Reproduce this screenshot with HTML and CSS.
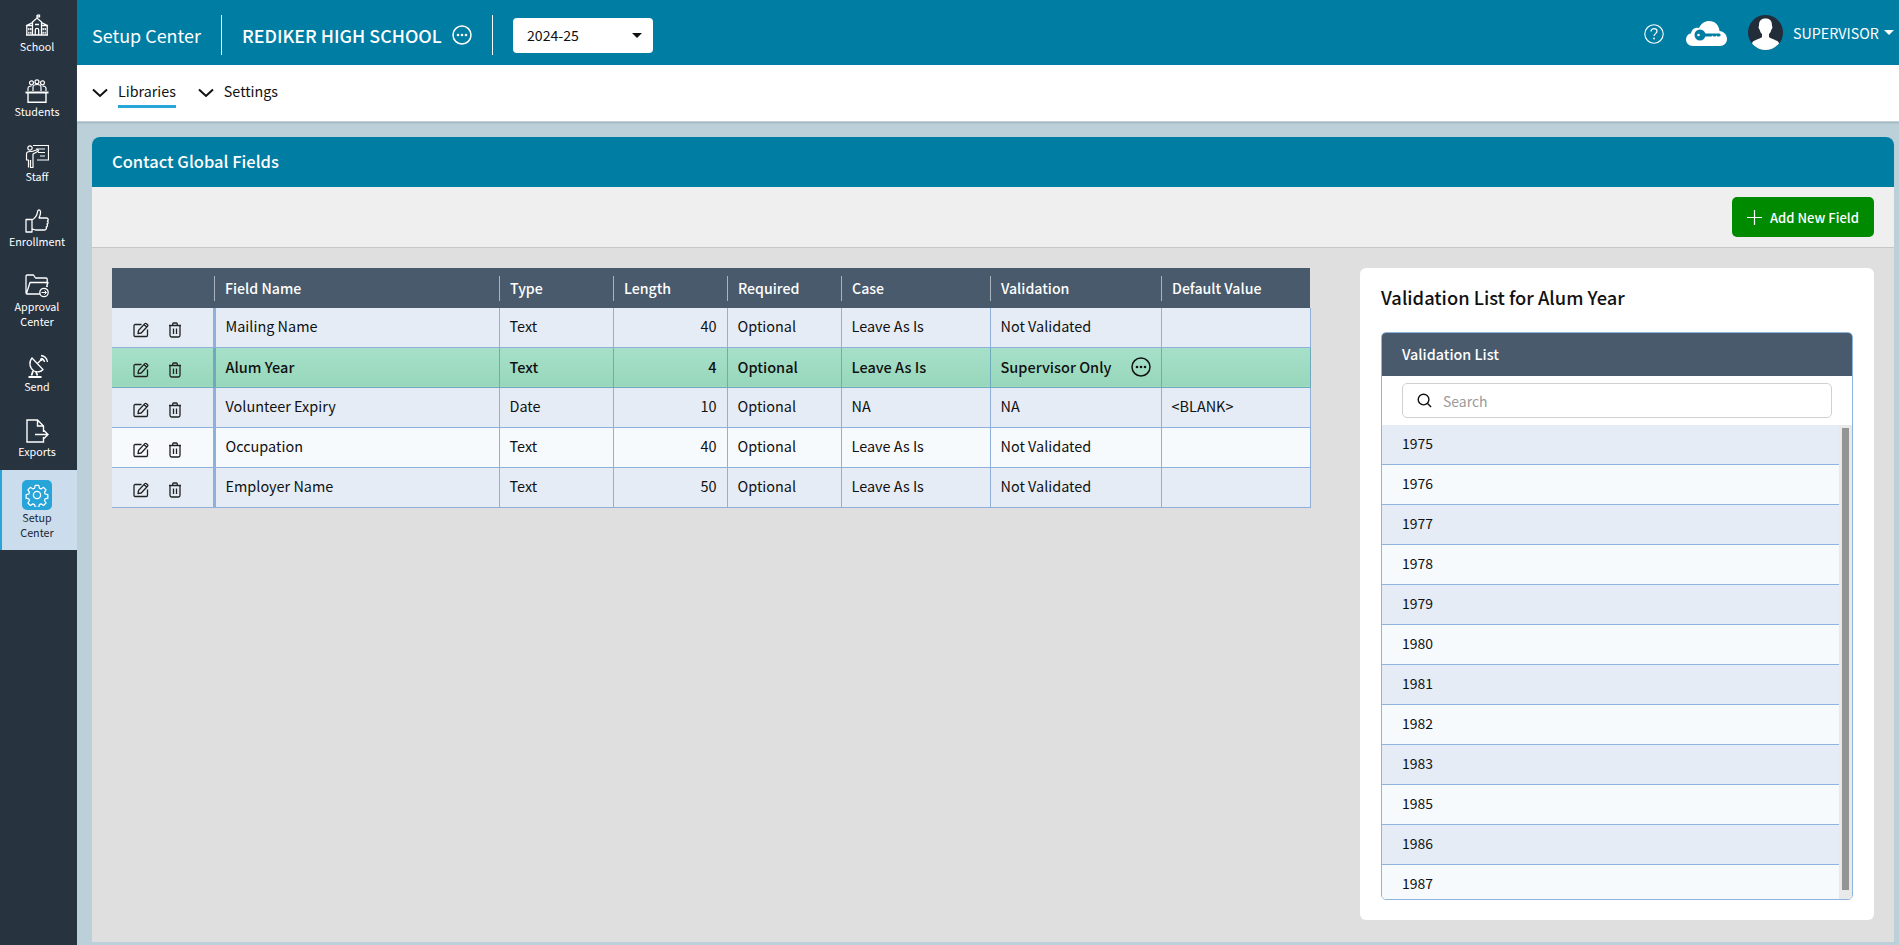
FILE: index.html
```html
<!DOCTYPE html>
<html lang="en">
<head>
<meta charset="utf-8">
<title>Contact Global Fields</title>
<link rel="stylesheet" href="styles.css">
</head>
<body>
<svg class="defs" aria-hidden="true">
  <symbol id="i-edit" viewBox="0 0 16 16"><path d="M8.500 2.500H2.200c-.7 0-1.200.5-1.200 1.200v9.600c0 .7.500 1.200 1.200 1.200h11.100c.7 0 1.200-.5 1.200-1.200V7.500" fill="none" stroke="currentColor" stroke-width="1.300"/><path d="M5.500 8.500 11.800 1.600c.4-.4 1-.4 1.400 0l1.300 1.200c.4.400.4 1 0 1.400L8.200 11l-3.200.6zM10.900 2.600l2.700 2.500" fill="none" stroke="currentColor" stroke-width="1.300" stroke-linejoin="round"/></symbol>
  <symbol id="i-trash" viewBox="0 0 14 16"><path d="M1 3.500h12M4.700 3.300V2c0-.6.400-1 1-1h2.600c.6 0 1 .4 1 1v1.300M2 3.700v9.600c0 .9.600 1.700 1.600 1.700h6.800c1 0 1.600-.8 1.600-1.700V3.700M5.500 6.500v5.500M8.500 6.500v5.500" fill="none" stroke="currentColor" stroke-width="1.300"/></symbol>
  <symbol id="i-more" viewBox="0 0 20 20"><circle cx="10" cy="10" r="9" fill="none" stroke="currentColor" stroke-width="1.500"/><circle cx="6" cy="10" r="1.300" fill="currentColor"/><circle cx="10" cy="10" r="1.300" fill="currentColor"/><circle cx="14" cy="10" r="1.300" fill="currentColor"/></symbol>
  <symbol id="i-chev" viewBox="0 0 16 10"><path d="M1 1.500 8 8l7-6.500" fill="none" stroke="currentColor" stroke-width="2"/></symbol>
</svg>

<nav class="sidebar">
  <a class="nav-item">
    <svg class="nav-icon" viewBox="0 0 24 24"><path d="M7.500 20.500V8L12 4l4.500 4v12.500M12 4V1M12 1.200h2.500v1.600H12M1 21h22M1.800 21v-9.500h5.700M22.200 21v-9.500h-5.700M1 11.800 7.500 8.500M23 11.800l-6.500-3.300M10.300 21v-5a1.700 1.700 0 0 1 3.400 0v5M3.800 14v2.300M5.800 14v2.300M18.200 14v2.300M20.200 14v2.300M3.800 17.800v2M5.800 17.800v2M18.200 17.800v2M20.200 17.800v2M10 10.500h4" fill="none" stroke="currentColor" stroke-width="1.300"/></svg>
    <span class="nav-label">School</span>
  </a>
  <a class="nav-item">
    <svg class="nav-icon" viewBox="0 0 24 24"><circle cx="6.500" cy="3.800" r="2" fill="none" stroke="currentColor" stroke-width="1.200"/><circle cx="12" cy="2.800" r="2" fill="none" stroke="currentColor" stroke-width="1.200"/><circle cx="17.500" cy="3.800" r="2" fill="none" stroke="currentColor" stroke-width="1.200"/><path d="M3 12V9.500C3 7.500 5 7 6.500 7M21 12V9.500C21 7.500 19 7 17.500 7M8 12V8c0-1.500 2-2.500 4-2.500S16 6.500 16 8v4" fill="none" stroke="currentColor" stroke-width="1.200"/><path d="M.5 12.500h23v2H.5z" fill="currentColor"/><path d="M3 14v9.300h18V14" fill="none" stroke="currentColor" stroke-width="1.400"/></svg>
    <span class="nav-label">Students</span>
  </a>
  <a class="nav-item">
    <svg class="nav-icon" viewBox="0 0 24 24"><path d="M8 1.500h15.500v14.500H12M11 5h9M13 8.500h7M15 12h5" fill="none" stroke="currentColor" stroke-width="1.200"/><circle cx="5" cy="4" r="2.200" fill="none" stroke="currentColor" stroke-width="1.200"/><path d="M3.500 23.500V16H1.500v-6C1.500 8 3 7.500 5 7.500h2l6-2 .5 1.500-5.500 3V23.500H5.500V16" fill="none" stroke="currentColor" stroke-width="1.200" stroke-linejoin="round"/></svg>
    <span class="nav-label">Staff</span>
  </a>
  <a class="nav-item">
    <svg class="nav-icon" viewBox="0 0 24 24"><path d="M1 10.500h6v12.500H1zM7 11c2.500-1.500 5-4 5.500-8 .2-1.500 1-2.500 2-2 1.500.8 1 4.500-.5 8h7.500c2 0 2.200 2.500.8 3 1.200.8 1 2.800-.3 3 .8 1 .5 2.800-.8 3 .5 1.200 0 3-1.700 3H11c-1.500 0-2.500-.8-4-1" fill="none" stroke="currentColor" stroke-width="1.300" stroke-linejoin="round"/></svg>
    <span class="nav-label">Enrollment</span>
  </a>
  <a class="nav-item nav-tall">
    <svg class="nav-icon" viewBox="0 0 24 24"><path d="M15 20H2.200C1.400 20 1 19.500 1 18.700V2.300C1 1.500 1.400 1 2.200 1h6.300l2 3H21c.8 0 1.200.5 1.200 1.200V13M1.500 19.500 5 8.500h18L21.500 13" fill="none" stroke="currentColor" stroke-width="1.300" stroke-linejoin="round"/><circle cx="19" cy="18.500" r="4.200" fill="none" stroke="currentColor" stroke-width="1.300"/><path d="M16.500 18.500h5M19.500 16.500l2 2-2 2" fill="none" stroke="currentColor" stroke-width="1"/></svg>
    <span class="nav-label">Approval<br>Center</span>
  </a>
  <a class="nav-item">
    <svg class="nav-icon" viewBox="0 0 24 24"><path d="M7 4c-3.500 4-2.500 10 2 13 3 1.500 7 1 9-1.500zM12 10l4-4M16 1.500c3.500.5 6 3 6.500 6.500M16 4.500c2 .3 3.200 1.500 3.500 3.500" fill="none" stroke="currentColor" stroke-width="1.300"/><path d="M8 17l-1.500 4.500M11 18l1.500 3.500M3.500 23h13" fill="none" stroke="currentColor" stroke-width="1.800"/><circle cx="16.500" cy="5.500" r="1.400" fill="currentColor"/></svg>
    <span class="nav-label">Send</span>
  </a>
  <a class="nav-item">
    <svg class="nav-icon" viewBox="0 0 24 24"><path d="M18.500 13V7l-6-6H2v22h16.500v-5M12.500 1v6h6M10 15.500h13M19 11.500l4 4-4 4" fill="none" stroke="currentColor" stroke-width="1.400"/></svg>
    <span class="nav-label">Exports</span>
  </a>
  <a class="nav-item nav-active">
    <span class="gear-box">
      <svg class="gear" viewBox="0 0 24 24"><path d="M10 1.200h4l.7 3.200 1.900.8 2.800-1.800 2.800 2.800-1.800 2.800.8 1.900 3 .7v4l-3 .7-.8 1.900 1.800 2.800-2.800 2.800-2.800-1.800-1.900.8-.7 3h-4l-.7-3-1.900-.8-2.800 1.800-2.800-2.800 1.800-2.800-.8-1.900-3-.7v-4l3-.7.8-1.900-1.800-2.800 2.800-2.800 2.800 1.800 1.900-.8z" transform="translate(1.300 1.300) scale(.89)" fill="none" stroke="currentColor" stroke-width="1.400" stroke-linejoin="round"/><circle cx="12" cy="12" r="3.600" fill="none" stroke="currentColor" stroke-width="1.300"/></svg>
    </span>
    <span class="nav-label">Setup<br>Center</span>
  </a>
</nav>

<div class="main">
  <header class="topbar">
    <span class="app-name">Setup Center</span>
    <span class="top-div"></span>
    <span class="school">REDIKER HIGH SCHOOL</span>
    <svg class="school-more"><use href="#i-more"/></svg>
    <span class="top-div"></span>
    <div class="year"><span>2024-25</span><i class="year-caret"></i></div>
    <div class="top-right">
      <svg class="help" viewBox="0 0 20 20"><circle cx="10" cy="10" r="9.200" fill="none" stroke="currentColor" stroke-width="1.100"/><path d="M7 7.500C7 5.500 8.500 4.700 10 4.700s3 1 3 2.600c0 2.200-3 2.400-3 4.700" fill="none" stroke="currentColor" stroke-width="1.200"/><circle cx="10" cy="14.500" r=".9" fill="currentColor"/></svg>
      <svg class="cloud" viewBox="0 0 41 25"><path d="M7 25C2.500 25 0 22 0 18.500c0-3 2-5.500 5-6.200C6 7.500 10 6 13 7 15 2.500 19 0 23 0c6 0 10 4 10.500 10 4 .5 7.500 3.500 7.500 8 0 4-3 7-7 7z" fill="#fff"/><circle cx="14" cy="14" r="5.500" fill="#007da3"/><circle cx="12.500" cy="14" r="1.300" fill="#fff"/><path d="M18 12.500h15.500l1.500 1.500-1.500 1.500h-2l-1-1-1 1h-2l-1-1-1 1H18z" fill="#007da3"/></svg>
      <svg class="avatar" viewBox="0 0 35 35"><defs><clipPath id="av"><circle cx="17.500" cy="17.500" r="17.500"/></clipPath></defs><circle cx="17.500" cy="17.500" r="17.500" fill="#222d39"/><path clip-path="url(#av)" d="M11 10.500C11 5 14 3.500 17.500 3.500S24 5 24 10.500c0 1 .6 1 .3 2.600-.2 1-.6 1.200-.9 1.400-.4 2-1.400 3.500-2.400 4.500v3c1 1.500 6 2.500 9 4.500 1 .8 1.500 4 1.500 8.500H3.500c0-4.500.5-7.700 1.500-8.500 3-2 8-3 9-4.500v-3c-1-1-2-2.500-2.400-4.500-.3-.2-.7-.4-.9-1.400-.3-1.600.3-1.600.3-2.600z" fill="#fff"/></svg>
      <span class="user">SUPERVISOR</span>
      <i class="user-caret"></i>
    </div>
  </header>

  <div class="subnav">
    <a class="sub-item"><svg class="chev"><use href="#i-chev"/></svg><span class="sub-label sub-on">Libraries</span></a>
    <a class="sub-item"><svg class="chev"><use href="#i-chev"/></svg><span class="sub-label">Settings</span></a>
  </div>

  <div class="content">
    <section class="panel">
      <h1 class="panel-head">Contact Global Fields</h1>
      <div class="toolbar">
        <button class="add-btn" type="button">
          <svg class="plus" viewBox="0 0 15 15"><path d="M7.500 0v15M0 7.500h15" stroke="currentColor" stroke-width="1.200"/></svg>
          Add New Field
        </button>
      </div>
      <div class="panel-body">
        <table class="fields">
          <colgroup>
            <col class="c-act"><col class="c-name"><col class="c-type"><col class="c-len"><col class="c-req"><col class="c-case"><col class="c-val"><col class="c-def">
          </colgroup>
          <thead>
            <tr><th></th><th><span>Field Name</span></th><th><span>Type</span></th><th><span>Length</span></th><th><span>Required</span></th><th><span>Case</span></th><th><span>Validation</span></th><th><span>Default Value</span></th></tr>
          </thead>
          <tbody>
            <tr class="alt">
              <td class="acts"><svg class="ed"><use href="#i-edit"/></svg><svg class="tr"><use href="#i-trash"/></svg></td>
              <td>Mailing Name</td><td>Text</td><td class="num">40</td><td>Optional</td><td>Leave As Is</td><td>Not Validated</td><td></td>
            </tr>
            <tr class="sel">
              <td class="acts"><svg class="ed"><use href="#i-edit"/></svg><svg class="tr"><use href="#i-trash"/></svg></td>
              <td>Alum Year</td><td>Text</td><td class="num">4</td><td>Optional</td><td>Leave As Is</td>
              <td><div class="val-cell"><span>Supervisor Only</span><svg class="row-more"><use href="#i-more"/></svg></div></td><td></td>
            </tr>
            <tr class="alt">
              <td class="acts"><svg class="ed"><use href="#i-edit"/></svg><svg class="tr"><use href="#i-trash"/></svg></td>
              <td>Volunteer Expiry</td><td>Date</td><td class="num">10</td><td>Optional</td><td>NA</td><td>NA</td><td>&lt;BLANK&gt;</td>
            </tr>
            <tr>
              <td class="acts"><svg class="ed"><use href="#i-edit"/></svg><svg class="tr"><use href="#i-trash"/></svg></td>
              <td>Occupation</td><td>Text</td><td class="num">40</td><td>Optional</td><td>Leave As Is</td><td>Not Validated</td><td></td>
            </tr>
            <tr class="alt">
              <td class="acts"><svg class="ed"><use href="#i-edit"/></svg><svg class="tr"><use href="#i-trash"/></svg></td>
              <td>Employer Name</td><td>Text</td><td class="num">50</td><td>Optional</td><td>Leave As Is</td><td>Not Validated</td><td></td>
            </tr>
          </tbody>
        </table>

        <aside class="card">
          <h2 class="card-title">Validation List for Alum Year</h2>
          <div class="list-box">
            <div class="list-head">Validation List</div>
            <div class="search-wrap">
              <div class="search">
                <svg class="search-ic" viewBox="0 0 16 16"><circle cx="7" cy="7" r="5.700" fill="none" stroke="currentColor" stroke-width="1.500"/><path d="m11 11 4 4" stroke="currentColor" stroke-width="1.500"/></svg>
                <span class="search-ph">Search</span>
              </div>
            </div>
            <div class="list-scroll">
              <ul class="years">
                <li>1975</li><li>1976</li><li>1977</li><li>1978</li><li>1979</li><li>1980</li><li>1981</li><li>1982</li><li>1983</li><li>1985</li><li>1986</li><li>1987</li>
              </ul>
              <div class="track"><div class="thumb"></div></div>
            </div>
          </div>
        </aside>
      </div>
    </section>
  </div>
</div>
</body>
</html>
```

FILE: styles.css
```css
* { box-sizing: border-box; }
html, body { margin: 0; height: 945px; overflow: hidden; }
body {
  display: flex;
  font-family: "Noto Sans CJK SC", "Noto Sans", sans-serif;
  font-size: 14.450px;
  color: #111;
  background: #bcd0da;
}
.defs { display: none; }

.sidebar { width: 77px; flex: none; background: #27333f; color: #fff; }
.nav-item {
  height: 65px; padding: 14px 3px 0 0;
  display: flex; flex-direction: column; align-items: center;
  color: #fff;
}
.nav-tall { height: 80px; }
.nav-icon { width: 24px; height: 24px; flex: none; }
.nav-label { margin-top: 1px; font-size: 10.750px; line-height: 15px; text-align: center; white-space: nowrap; }
.nav-active {
  height: 80px; padding: 10px 5px 0 0;
  background: #cbdcec; color: #1b2733;
  border-left: 2px solid #2aa5d8;
}
.nav-active .nav-label { margin-top: 0; }
.gear-box {
  width: 30px; height: 30px; border-radius: 5px;
  background: #27a5d9; color: #fff;
  display: flex; align-items: center; justify-content: center;
}
.gear { width: 24px; height: 24px; }

.main { flex: 1; min-width: 0; display: flex; flex-direction: column; }

.topbar {
  height: 65px; flex: none; background: #007da3; color: #fff;
  display: flex; align-items: center; padding: 5px 0 0 15px;
}
.app-name { font-size: 17.950px; width: 129px; white-space: nowrap; }
.top-div { width: 1px; height: 40px; background: #fff; }
.school { margin-left: 20px; font-size: 17.880px; font-weight: 500; white-space: nowrap; width: 200px; }
.school-more { width: 20px; height: 20px; margin: 0 20px 0 10px; }
.year {
  margin-left: 20px; width: 140px; height: 35px; border-radius: 4px;
  background: #fff; color: #111; font-size: 14.140px;
  display: flex; align-items: center; justify-content: space-between;
  padding: 0 11px 0 14px;
}
.year-caret {
  width: 0; height: 0;
  border-left: 5px solid transparent; border-right: 5px solid transparent; border-top: 5px solid #111;
}
.top-right { margin-left: auto; margin-top: -5px; display: flex; align-items: center; padding-right: 5px; }
.help { width: 20px; height: 20px; margin-top: 3px; }
.cloud { width: 41px; height: 25px; margin-left: 22px; margin-top: 1px; }
.avatar { width: 35px; height: 35px; margin-left: 21px; }
.user { margin-left: 10px; font-size: 14.280px; white-space: nowrap; margin-top: -1px; width: 91px; }
.user-caret {
  width: 0; height: 0;
  border-left: 5px solid transparent; border-right: 5px solid transparent; border-top: 5px solid #fff;
}

.subnav {
  height: 57px; flex: none; background: #fff;
  border-bottom: 1px solid #c3cfd6;
  box-shadow: 0 1px 2px rgba(90, 120, 135, .35);
  display: flex; padding-left: 15px; gap: 22px;
}
.sub-item { display: flex; align-items: flex-start; padding-top: 15px; height: 44px; color: #111; }
.chev { width: 16px; height: 10px; margin: 8px 10px 0 0; }
.sub-label { font-size: 14.300px; line-height: 22px; height: 28px; display: block; }
.sub-on { border-bottom: 3px solid #2aa5d8; }

.content { flex: 1; min-height: 0; padding: 15px 5px 3px 15px; }
.panel {
  height: 100%; display: flex; flex-direction: column;
  background: #dfdfdf; border-radius: 8px 8px 0 0;
}
.panel-head {
  margin: 0; height: 50px; flex: none;
  background: #007da3; color: #fff;
  border-radius: 8px 8px 0 0;
  padding-left: 20px;
  font-size: 16.510px; font-weight: 500; line-height: 48px;
}
.toolbar {
  height: 61px; flex: none; background: #efefef;
  border-bottom: 1px solid #c7c7c7;
  display: flex; justify-content: flex-end; align-items: center;
  padding: 0 20px 0 0;
}
.add-btn {
  width: 142px; height: 40px; border: 0; border-radius: 5px; padding: 0 0 0 15px;
  background: #008a00; color: #fff;
  display: flex; align-items: center; gap: 8px;
  font: 500 13.070px "Noto Sans CJK SC", "Noto Sans", sans-serif;
}
.plus { width: 15px; height: 15px; flex: none; }

.panel-body {
  flex: 1; min-height: 0; padding: 20px 20px 0;
  display: flex; justify-content: space-between; align-items: flex-start;
}

.fields { width: 1198px; table-layout: fixed; border-collapse: collapse; }
.c-act { width: 102px; }
.c-name { width: 285px; }
.c-type { width: 114px; }
.c-len { width: 114px; }
.c-req { width: 114px; }
.c-case { width: 149px; }
.c-val { width: 171px; }
.c-def { width: 149px; }
.fields th {
  height: 40px; padding: 0; background: #485a6c; color: #fff;
  font-size: 14.150px; font-weight: 500; text-align: left;
}
.fields th span {
  display: block; height: 25px; line-height: 25px;
  border-left: 1px solid #a9b4be; padding-left: 10px;
}
.fields td {
  height: 40px; padding: 0 10px 2px;
  border: 1px solid #8fb0d8;
  font-size: 14.450px; line-height: 20px; vertical-align: middle;
  background: #f7fafd;
}
.fields tbody tr:first-child td { border-top: 0; height: 39px; }
.fields td:first-child { border-left: 0; border-right: 3px solid #8fb0d8; }
.fields .alt td { background: #e5ecf6; }
.fields .sel td {
  background: linear-gradient(#a7e0c9, #97d7bb);
  font-weight: 500; font-size: 14.530px;
  border-color: #6fa9bd;
  padding-bottom: 0;
}
.fields td.num { text-align: right; }
.fields td.acts { padding: 1px 0 0 21px; color: #222; }
.acts svg { display: inline-block; vertical-align: middle; }
.ed { width: 16px; height: 16px; }
.tr { width: 14px; height: 16px; margin-left: 19px; }
.val-cell { display: flex; justify-content: space-between; align-items: center; height: 20px; }
.row-more { width: 20px; height: 20px; }

.card {
  width: 514px; height: 652px; flex: none;
  background: #fff; border-radius: 6px;
  padding: 16px 21px 21px 21px;
}
.card-title { margin: 0 0 22px; height: 26px; font-size: 18.320px; font-weight: 500; line-height: 26px; }
.list-box {
  height: 568px; border: 1px solid #8fb5de; border-radius: 5px;
  overflow: hidden; background: #fff;
  display: flex; flex-direction: column;
}
.list-head {
  height: 43px; flex: none; background: #485a6c; color: #fff;
  padding-left: 20px; font-size: 14.340px; font-weight: 500; line-height: 41px;
}
.search-wrap { height: 49px; flex: none; padding: 7px 20px 0; }
.search {
  height: 35px; border: 1px solid #d0d0d0; border-radius: 5px;
  display: flex; align-items: center; padding-left: 14px;
}
.search-ic { width: 15px; height: 15px; color: #111; flex: none; }
.search-ph { margin-left: 11px; color: #9a9a9a; font-size: 13.950px; }
.list-scroll { flex: 1; min-height: 0; display: flex; overflow: hidden; }
.years { flex: 1; list-style: none; margin: 0; padding: 0; }
.years li {
  height: 40px; padding-left: 20px; background: #f6fafd;
  border-bottom: 1px solid #8fb5de;
  font-size: 13.960px; line-height: 36px;
}
.years li:nth-child(odd) { background: #e5ecf6; }
.track { width: 13px; flex: none; background: #e9e9e9; padding: 3px 3px 9px 3px; }
.thumb { height: 100%; background: #949494; }
```
